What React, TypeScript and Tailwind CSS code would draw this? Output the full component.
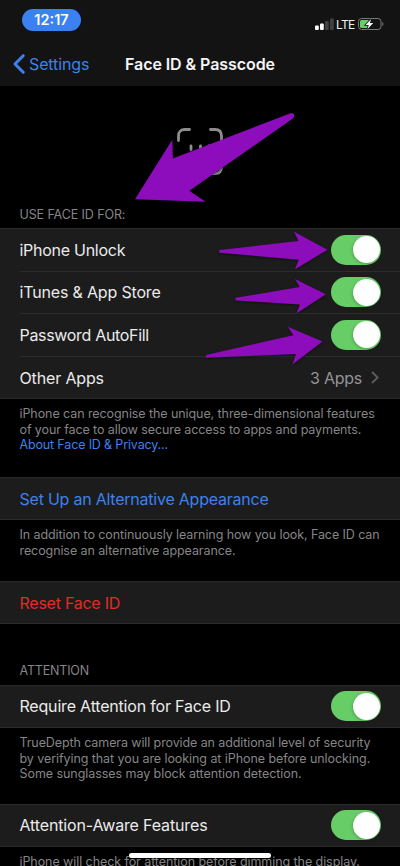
import type { ReactNode } from 'react'
import clsx from 'clsx'

const faceIdRows = [
    { label: 'iPhone Unlock', tracking: 'tracking-[-0.27px]' },
    { label: 'iTunes & App Store', tracking: 'tracking-[-0.17px]' },
    { label: 'Password AutoFill', tracking: 'tracking-[-0.32px]' },
]

const arrows = [
    'M172.3 139.7L172.8 158.5L290.5 113.3Q294.5 112.5 294.2 115.5Q294 117.8 292.5 118.8L189.3 190.7L205.5 201.8L135 199.3Z',
    'M219.5 250L298.5 241L293.8 231.4L327.4 249.7L294.8 269.4L298.8 259.8L219.5 252.7Q218.5 251.3 219.5 250Z',
    'M235.8 297.8L299.8 287L295 279L325.8 294.3L296.4 313.4L300 304.4L235.8 300.4Q235 299 235.8 297.8Z',
    'M206.2 355L293.4 335.3L287.8 326.8L322.5 341.4L292.4 364.4L296 354L206.2 357.8Q205.2 356.4 206.2 355Z',
]

function Toggle() {
    return (
        <div className="flex h-[30px] w-[50px] shrink-0 items-center justify-end rounded-full bg-[#67ce67] pr-[1.5px]">
            <div className="size-[27px] rounded-full bg-white shadow-[-1px_1px_3px_rgba(0,0,0,0.2)]" />
        </div>
    )
}

function Section({ children, className }: { children: ReactNode; className?: string }) {
    return (
        <section className={clsx('border-y border-[#29292b] bg-[#1c1c1d]', className)}>
            {children}
        </section>
    )
}

function Note({ lines, className }: { lines: { text: string; tracking: string }[]; className?: string }) {
    return (
        <div className={clsx('pl-[19.5px] text-[12.5px] leading-[15.5px] whitespace-nowrap text-[#858587]', className)}>
            {lines.map((l) => (
                <p key={l.text} className={l.tracking}>{l.text}</p>
            ))}
        </div>
    )
}

function StatusBar() {
    return (
        <div className="flex h-[42px] items-start justify-between pt-[9px] pr-[16px] pl-[22px]">
            <div className="flex h-[22px] w-[59px] items-center justify-center rounded-full bg-[#3a81f1] text-[14.5px] font-semibold text-white">
                12:17
            </div>
            <div className="mt-[8px] flex h-[14px] items-center">
                <svg width="19" height="12" viewBox="0 0 19 12">
                    <rect x="0" y="7.5" width="3.8" height="4.5" rx="1" fill="#fff" />
                    <rect x="5" y="5.5" width="3.8" height="6.5" rx="1" fill="#fff" />
                    <rect x="10" y="3" width="3.8" height="9" rx="1" fill="#414141" />
                    <rect x="15" y="0.5" width="3.8" height="11.5" rx="1" fill="#414141" />
                </svg>
                <span className="mt-px ml-[2px] w-[20px] text-[12px] tracking-[-0.7px] text-[#f0f0f0]">LTE</span>
                <svg width="26" height="12" viewBox="0 0 26 12" className="ml-[2px]">
                    <rect x="0.5" y="0.5" width="22.5" height="11" rx="3" fill="none" stroke="#79797a" />
                    <path d="M24.3 4V8Q25.5 7.4 25.5 6T24.3 4Z" fill="#79797a" />
                    <rect x="2" y="2" width="9.5" height="8" rx="1.5" fill="#65d064" />
                    <path d="M13.2 1L7.6 6.9H10.8L9.4 11.2L15.2 5H11.9Z" fill="#fff" stroke="#131313" strokeWidth="1.6" paintOrder="stroke" />
                </svg>
            </div>
        </div>
    )
}

export default function App() {
    return (
        <div className="relative h-[866px] w-[400px] overflow-hidden bg-black font-['Inter',sans-serif] text-[16px] text-[#ebebeb]">
            <header className="h-[86px] bg-[#131313]">
                <StatusBar />
                <div className="grid h-[44px] grid-cols-[125px_150px_125px] items-center whitespace-nowrap">
                    <div className="flex items-center text-[#3b82ee]">
                        <svg width="12" height="20" viewBox="0 0 12 20" className="ml-[12.5px]" fill="none" stroke="currentColor" strokeWidth="3" strokeLinecap="round" strokeLinejoin="round">
                            <path d="M10.2 1.7L2 10L10.2 18.3" />
                        </svg>
                        <span className="ml-[4.5px] tracking-[-0.13px]">Settings</span>
                    </div>
                    <h1 className="font-semibold tracking-[-0.07px] text-[#f5f5f5]">Face ID & Passcode</h1>
                </div>
            </header>

            <div className="flex h-[120px] justify-center pt-[42px]">
                <svg width="46" height="47" viewBox="0 0 46 47" fill="none" stroke="#8d8d8f" strokeWidth="2.8" strokeLinecap="round">
                    <path d="M1.5 12.5V8Q1.5 1.5 8 1.5H12.5M33.5 1.5H38Q44.5 1.5 44.5 8V12.5M44.5 34V39Q44.5 45.5 38 45.5H33.5M12.5 45.5H8Q1.5 45.5 1.5 39V34" />
                    <path d="M14 18V21.5M32 18V21.5M23.5 18V26H21.5M15 33Q23 38 31 33" />
                </svg>
            </div>

            <h2 className="h-[22px] pl-[19.5px] text-[12.5px] leading-[18px] tracking-[-0.1px] text-[#858587]">USE FACE ID FOR:</h2>
            <Section className="h-[171px]">
                {faceIdRows.map((row) => (
                    <div key={row.label} className="flex h-[42.5px] pl-[19.5px]">
                        <div className="flex flex-1 items-center justify-between border-b border-[#2c2c2e] pr-[19px]">
                            <span className={row.tracking}>{row.label}</span>
                            <Toggle />
                        </div>
                    </div>
                ))}
                <div className="flex h-[42px] items-center pr-[21px] pl-[19.5px]">
                    <span className="tracking-[-0.15px]">Other Apps</span>
                    <span className="ml-auto tracking-[-0.25px] text-[#949496]">3 Apps</span>
                    <svg width="8" height="13" viewBox="0 0 8 13" className="ml-[9px]" fill="none" stroke="#5d5d60" strokeWidth="1.8">
                        <path d="M1 1L6.6 6.5L1 12" />
                    </svg>
                </div>
            </Section>
            <Note
                className="h-[78px] pt-[7px]"
                lines={[
                    { text: 'iPhone can recognise the unique, three-dimensional features', tracking: 'tracking-[-0.08px]' },
                    { text: 'of your face to allow secure access to apps and payments.', tracking: 'tracking-[-0.1px]' },
                    { text: 'About Face ID & Privacy...', tracking: 'tracking-[-0.15px] text-[#3b82ee]' },
                ]}
            />

            <Section className="flex h-[43px] items-center pl-[19.5px] text-[#3b82ee]">
                <span className="tracking-[-0.23px]">Set Up an Alternative Appearance</span>
            </Section>
            <Note
                className="h-[61px] pt-[7px]"
                lines={[
                    { text: 'In addition to continuously learning how you look, Face ID can', tracking: 'tracking-[-0.09px]' },
                    { text: 'recognise an alternative appearance.', tracking: 'tracking-[-0.09px]' },
                ]}
            />

            <Section className="flex h-[43px] items-center pl-[19.5px] text-[#e22c23]">
                <span className="tracking-[-0.25px]">Reset Face ID</span>
            </Section>

            <h2 className="h-[61px] pt-[38px] pl-[19.5px] text-[12.5px] leading-[18px] tracking-[-0.17px] text-[#858587]">ATTENTION</h2>
            <Section className="flex h-[43px] items-center justify-between pr-[19px] pb-px pl-[19.5px]">
                <span className="tracking-[-0.19px]">Require Attention for Face ID</span>
                <Toggle />
            </Section>
            <Note
                className="h-[76px] pt-[7px]"
                lines={[
                    { text: 'TrueDepth camera will provide an additional level of security', tracking: 'tracking-[-0.1px]' },
                    { text: 'by verifying that you are looking at iPhone before unlocking.', tracking: 'tracking-[-0.07px]' },
                    { text: 'Some sunglasses may block attention detection.', tracking: 'tracking-[-0.06px]' },
                ]}
            />

            <Section className="flex h-[43px] items-center justify-between pr-[19px] pb-px pl-[19.5px]">
                <span className="tracking-[-0.15px]">Attention-Aware Features</span>
                <Toggle />
            </Section>
            <Note
                className="pt-[7px]"
                lines={[{ text: 'iPhone will check for attention before dimming the display.', tracking: 'tracking-[-0.07px]' }]}
            />

            {/* Arrows drawn over the screen */}
            <svg className="pointer-events-none absolute inset-0 drop-shadow-[0_1px_1px_rgba(0,0,0,0.5)]" width="400" height="866" fill="#8d0dbd">
                {arrows.map((d) => (
                    <path key={d} d={d} />
                ))}
            </svg>

            {/* Home indicator */}
            <div className="absolute bottom-[8px] left-[129px] h-[5px] w-[142px] rounded-full bg-white" />
        </div>
    )
}
